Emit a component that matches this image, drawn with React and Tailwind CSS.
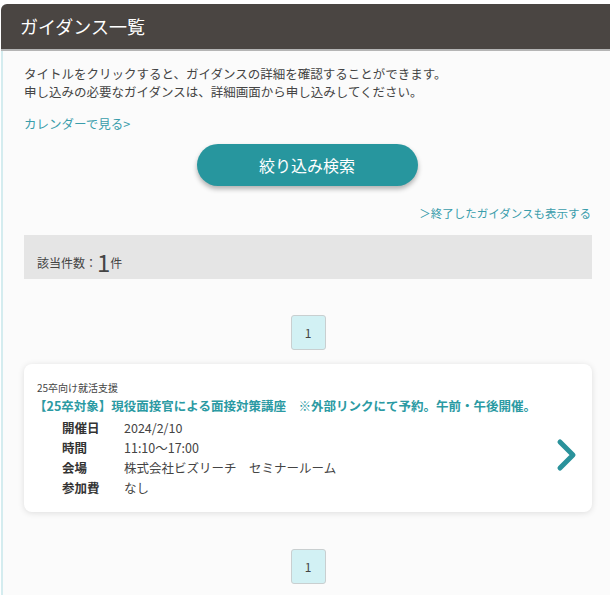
// App.jsx — ガイダンス一覧 panel

const font = { fontFamily: '"Noto Sans CJK JP", "Noto Sans", sans-serif' };

function Pager() {
    return (
        <div className="flex justify-center">
            <div className="w-[35px] h-[35px] flex items-center justify-center bg-[#d2f1f4] border border-[#c9cfd0] rounded-[3px] text-[12px] text-[#444]">
                1
            </div>
        </div>
    );
}

function Row({ label, value }) {
    return (
        <div className="flex h-[20px] items-center">
            <span className="w-[62px] font-bold text-[#333]">{label}</span>
            <span className="text-[#444]">{value}</span>
        </div>
    );
}

export default function App() {
    return (
        <div className="w-[610px] h-[595px] overflow-hidden bg-white pt-[4px] pl-[1px]" style={font}>
            <div className="w-[640px] rounded-tl-[6px] overflow-hidden">
                {/* Header */}
                <div className="h-[47px] bg-[#4a4542] border-b-2 border-[#b5b5b5] flex items-center pl-[19px]">
                    <h1 className="text-[18px] text-white">ガイダンス一覧</h1>
                </div>

                {/* Body */}
                <div className="border-l-2 border-[#d4ecef] bg-[#fbfbfb] pl-[21px] pt-[14px] pb-[40px]">
                    <div className="w-[568px]">
                        <p className="text-[12.5px] leading-[18px] text-[#444]">
                            タイトルをクリックすると、ガイダンスの詳細を確認することができます。
                            <br />
                            申し込みの必要なガイダンスは、詳細画面から申し込みしてください。
                        </p>
                        <a className="block mt-[14px] text-[12.5px] leading-[18px] text-[#3a9dab]">カレンダーで見る&gt;</a>

                        <div className="flex justify-center mt-[11px] pr-[2px]">
                            <button className="w-[221px] h-[42px] rounded-full bg-[#27969e] text-white text-[16px] shadow-[0_3px_5px_rgba(0,0,0,0.3)]">
                                絞り込み検索
                            </button>
                        </div>

                        <div className="mt-[13px] text-right pr-[1px]">
                            <a className="text-[11.5px] leading-[18px] text-[#3a9dab]">＞終了したガイダンスも表示する</a>
                        </div>

                        <div className="mt-[12px] h-[44px] bg-[#e5e5e5] flex items-end pl-[13px] pb-[7px] text-[#444]">
                            <span className="text-[12px] leading-[18px]">該当件数：</span>
                            <span className="text-[24px] leading-[26px] -mb-[3px]">1</span>
                            <span className="text-[12px] leading-[18px]">件</span>
                        </div>

                        <div className="mt-[36px]">
                            <Pager />
                        </div>

                        {/* Result card */}
                        <div className="mt-[14px] h-[148px] bg-white rounded-[8px] shadow-[0_1px_6px_rgba(0,0,0,0.12)] flex items-start pl-[13px] pr-[13px] pt-[16px]">
                            <div className="flex-1">
                                <p className="text-[10px] leading-[16px] text-[#444]">25卒向け就活支援</p>
                                <p className="text-[12.5px] leading-[20px] font-bold text-[#2b9aa3] -ml-[3px]">
                                    【25卒対象】現役面接官による面接対策講座　※外部リンクにて予約。午前・午後開催。
                                </p>
                                <div className="mt-[2px] pl-[25px] text-[12.5px]">
                                    <Row label="開催日" value="2024/2/10" />
                                    <Row label="時間" value="11:10～17:00" />
                                    <Row label="会場" value="株式会社ビズリーチ　セミナールーム" />
                                    <Row label="参加費" value="なし" />
                                </div>
                            </div>
                            <svg width="24" height="34" viewBox="0 0 24 34" className="mt-[58px] -ml-[30px]">
                                <polyline points="5,4 18,17 5,30" fill="none" stroke="#2a929b" strokeWidth="5" strokeLinecap="round" strokeLinejoin="round" />
                            </svg>
                        </div>

                        <div className="mt-[37px]">
                            <Pager />
                        </div>
                    </div>
                </div>
            </div>
        </div>
    );
}
